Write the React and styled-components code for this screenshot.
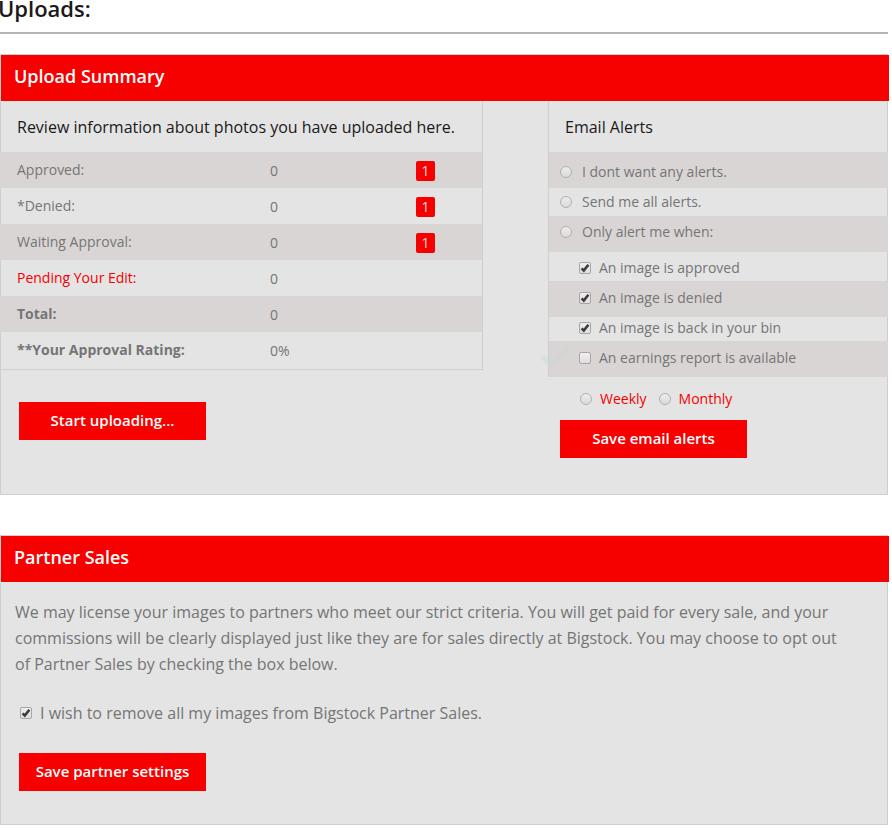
import React from 'react';
import styled, { createGlobalStyle } from 'styled-components';

const RED = '#f60000';
const GREY = '#757575';
const BAND = '#d9d5d4';
const LINE = '#cfcfcf';

const GlobalStyle = createGlobalStyle`
  *, *::before, *::after { box-sizing: border-box; }
  body {
    margin: 0;
    background: #fff;
    color: ${GREY};
    font: 14px/20px 'Open Sans', 'Noto Sans', sans-serif;
  }
  button, input { font: inherit; }
`;

const Page = styled.main`
  padding-right: 4px;
  padding-bottom: 8px;
`;

const Title = styled.h1`
  margin: 0 0 0 -2px;
  font-size: 22px;
  font-weight: 600;
  line-height: 16px;
  color: #1a1a1a;
`;

const PageHead = styled.header`
  padding-bottom: 16px;
  margin-bottom: 20px;
  border-bottom: 2px solid #b5b5b5;
`;

const Panel = styled.section`
  border: 1px solid ${LINE};
  background: #e4e4e4;
  & + & { margin-top: 40px; }
`;

const PanelTitle = styled.h2`
  margin: 0 -2px 0 0;
  padding: 9px 13px 13px;
  background: ${RED};
  color: #fff;
  font-size: 18px;
  font-weight: 600;
  line-height: 24px;
`;

const Columns = styled.div`
  display: grid;
  grid-template-columns: 482fr 339fr;
  column-gap: 65px;
  align-items: start;
  padding-bottom: 36px;
`;

const ColumnTitle = styled.h3`
  margin: 0;
  padding: 14px 16px 13px;
  color: #1a1a1a;
  font-size: 16px;
  font-weight: 400;
  line-height: 24px;
`;

const SummaryBox = styled.div`
  border-right: 1px solid ${LINE};
  border-bottom: 1px solid ${LINE};
  padding-bottom: 1px;
`;

const Stats = styled.table`
  width: calc(100% + 1px);
  margin-left: -1px;
  table-layout: fixed;
  border-collapse: collapse;
`;

const StatRow = styled.tr`
  height: 36px;
  &:nth-child(odd) { background: ${BAND}; }
`;

const StatLabel = styled.th`
  width: 56%;
  padding: 0 0 1px 17px;
  text-align: left;
  font-weight: ${(p) => (p.$strong ? 700 : 400)};
  color: ${(p) => (p.$alert ? RED : 'inherit')};
`;

const StatValue = styled.td`
  padding: 2px 0 0;
`;

const StatBadge = styled.td`
  width: 66px;
  padding: 2px 0 0;
`;

const Badge = styled.span`
  display: block;
  width: 19px;
  border-radius: 2px;
  background: ${RED};
  color: #e8dcdc;
  text-align: center;
`;

const Button = styled.button`
  display: block;
  width: 187px;
  height: 38px;
  padding: 0 0 2px;
  border: 0;
  background: ${RED};
  color: #fff;
  font-size: 15px;
  font-weight: 600;
  line-height: 20px;
  cursor: pointer;
`;

const SummaryActions = styled.div`
  padding: 32px 18px 0;
`;

const AlertsForm = styled.form`
  position: relative;
`;

const AlertsTop = styled.div`
  border-left: 1px solid ${LINE};
`;

const AlertRow = styled.div`
  height: ${(p) => p.$height}px;
  padding-top: ${(p) => p.$top}px;
  padding-left: ${(p) => (p.$nested ? 30 : 11)}px;
  margin-right: ${(p) => (p.$band ? '-1px' : 0)};
  background: ${(p) => (p.$band ? BAND : 'transparent')};
`;

const Choice = styled.label`
  display: inline-flex;
  align-items: center;
  gap: ${(p) => p.$gap || 8}px;
`;

const Frequency = styled.div`
  display: flex;
  gap: 12px;
  padding: 12px 32px 11px;
  color: ${RED};
`;

const AlertActions = styled.div`
  padding-left: 12px;
`;

const RadioInput = styled.input`
  appearance: none;
  flex: none;
  width: 12px;
  height: 12px;
  margin: 0;
  border: 1px solid #b0b0b0;
  border-radius: 50%;
  background: linear-gradient(#ededed, #dadada);
  &:checked { background: radial-gradient(circle, #444 0 3px, #e4e4e4 4px); }
`;

const CheckFrame = styled.span`
  display: grid;
  flex: none;
  width: 12px;
  height: 12px;
  place-items: center;
  & > * { grid-area: 1 / 1; }
`;

const CheckInput = styled.input`
  appearance: none;
  width: 12px;
  height: 12px;
  margin: 0;
  border: 1px solid #a6a6a6;
  border-radius: 2px;
  background: linear-gradient(#efefef, #dedede);
  & + svg { visibility: hidden; pointer-events: none; }
  &:checked + svg { visibility: visible; }
`;

const GhostTick = styled.svg`
  position: absolute;
  left: -8px;
  top: 245px;
  pointer-events: none;
`;

const PartnerBody = styled.div`
  padding: 17px 18px 33px;
  font-size: 16px;
  line-height: 26px;
`;

const PartnerText = styled.p`
  max-width: 840px;
  margin: 0 0 23px -4px;
`;

const PartnerChoice = styled.div`
  padding-left: 1px;
  margin-bottom: 27px;
`;

function Checkbox(props) {
  return (
    <CheckFrame>
      <CheckInput type="checkbox" {...props} />
      <svg width="12" height="12" viewBox="0 0 12 12" aria-hidden="true">
        <path d="M2.6 6.4 4.8 8.6 9.4 2.8" fill="none" stroke="#3c3c3c" strokeWidth="2.6" />
      </svg>
    </CheckFrame>
  );
}

const stats = [
  { label: 'Approved:', value: '0', badge: '1' },
  { label: '*Denied:', value: '0', badge: '1' },
  { label: 'Waiting Approval:', value: '0', badge: '1' },
  { label: 'Pending Your Edit:', value: '0', alert: true },
  { label: 'Total:', value: '0', strong: true },
  { label: '**Your Approval Rating:', value: '0%', strong: true },
];

const modes = [
  { label: 'I dont want any alerts.', height: 36, top: 10, band: true },
  { label: 'Send me all alerts.', height: 28, top: 4 },
  { label: 'Only alert me when:', height: 36, top: 6, band: true },
];

const events = [
  { label: 'An image is approved', height: 29, top: 6, on: true },
  { label: 'An image is denied', height: 36, top: 7, band: true, on: true },
  { label: 'An image is back in your bin', height: 24, top: 1, on: true },
  { label: 'An earnings report is available', height: 36, top: 7, band: true },
];

export default function App() {
  return (
    <>
      <GlobalStyle />
      <Page>
        <PageHead>
          <Title>Uploads:</Title>
        </PageHead>

        <Panel>
          <PanelTitle>Upload Summary</PanelTitle>
          <Columns>
            <div>
              <SummaryBox>
                <ColumnTitle>Review information about photos you have uploaded here.</ColumnTitle>
                <Stats>
                  <tbody>
                    {stats.map((s) => (
                      <StatRow key={s.label}>
                        <StatLabel scope="row" $strong={s.strong} $alert={s.alert}>{s.label}</StatLabel>
                        <StatValue>{s.value}</StatValue>
                        <StatBadge>{s.badge && <Badge>{s.badge}</Badge>}</StatBadge>
                      </StatRow>
                    ))}
                  </tbody>
                </Stats>
              </SummaryBox>
              <SummaryActions>
                <Button type="button">Start uploading...</Button>
              </SummaryActions>
            </div>

            <AlertsForm onSubmit={(e) => e.preventDefault()}>
              <AlertsTop>
                <ColumnTitle>Email Alerts</ColumnTitle>
                {modes.map((m) => (
                  <AlertRow key={m.label} $height={m.height} $top={m.top} $band={m.band}>
                    <Choice $gap={10}>
                      <RadioInput type="radio" name="mode" />
                      {m.label}
                    </Choice>
                  </AlertRow>
                ))}
                {events.map((ev) => (
                  <AlertRow key={ev.label} $height={ev.height} $top={ev.top} $band={ev.band} $nested>
                    <Choice>
                      <Checkbox defaultChecked={ev.on} />
                      {ev.label}
                    </Choice>
                  </AlertRow>
                ))}
              </AlertsTop>
              <Frequency>
                <Choice>
                  <RadioInput type="radio" name="frequency" />
                  Weekly
                </Choice>
                <Choice>
                  <RadioInput type="radio" name="frequency" />
                  Monthly
                </Choice>
              </Frequency>
              <AlertActions>
                <Button type="submit">Save email alerts</Button>
              </AlertActions>
              <GhostTick width="32" height="24" viewBox="0 0 32 24" aria-hidden="true">
                <path d="M4 12 11 18 27 4" fill="none" stroke="#c9d3d5" strokeOpacity="0.35" strokeWidth="6" strokeLinecap="round" />
              </GhostTick>
            </AlertsForm>
          </Columns>
        </Panel>

        <Panel>
          <PanelTitle>Partner Sales</PanelTitle>
          <PartnerBody>
            <PartnerText>
              We may license your images to partners who meet our strict criteria. You will get paid for every sale,
              and your commissions will be clearly displayed just like they are for sales directly at Bigstock. You may
              choose to opt out of Partner Sales by checking the box below.
            </PartnerText>
            <PartnerChoice>
              <Choice>
                <Checkbox defaultChecked />
                I wish to remove all my images from Bigstock Partner Sales.
              </Choice>
            </PartnerChoice>
            <Button type="button">Save partner settings</Button>
          </PartnerBody>
        </Panel>
      </Page>
    </>
  );
}
